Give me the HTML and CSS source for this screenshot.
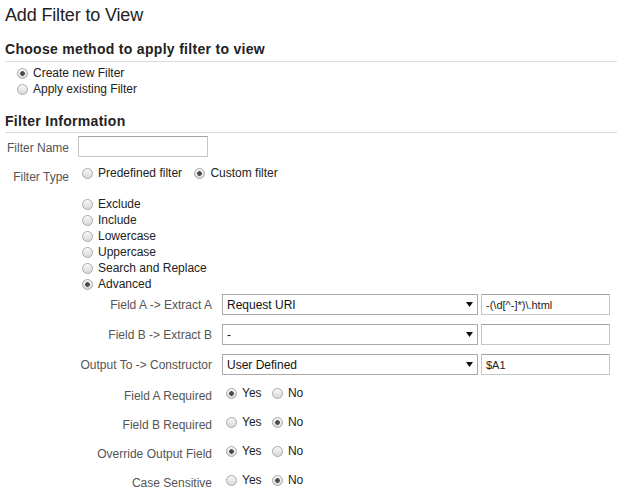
FILE: index.html
```html
<!DOCTYPE html>
<html>
<head>
<meta charset="utf-8">
<title>Add Filter to View</title>
<link rel="stylesheet" href="styles.css">
</head>
<body>
<div class="page">
  <h1 class="title">Add Filter to View</h1>

  <h2 class="section-head head-choose">Choose method to apply filter to view</h2>
  <div class="method-list">
    <label class="opt"><input class="radio" type="radio" name="method" checked><span>Create new Filter</span></label>
    <label class="opt"><input class="radio" type="radio" name="method"><span>Apply existing Filter</span></label>
  </div>

  <h2 class="section-head head-info">Filter Information</h2>
  <div class="row row-name">
    <span class="lbl lbl-short">Filter Name</span>
    <input class="text name-input" type="text">
  </div>
  <div class="row row-type">
    <span class="lbl lbl-short lbl-drop">Filter Type</span>
    <div class="inline-opts">
      <label class="opt opt-inline"><input class="radio" type="radio" name="ftype"><span>Predefined filter</span></label>
      <label class="opt opt-inline"><input class="radio" type="radio" name="ftype" checked><span>Custom filter</span></label>
    </div>
  </div>
  <div class="type-list">
    <label class="opt"><input class="radio" type="radio" name="custom"><span>Exclude</span></label>
    <label class="opt"><input class="radio" type="radio" name="custom"><span>Include</span></label>
    <label class="opt"><input class="radio" type="radio" name="custom"><span>Lowercase</span></label>
    <label class="opt"><input class="radio" type="radio" name="custom"><span>Uppercase</span></label>
    <label class="opt"><input class="radio" type="radio" name="custom"><span>Search and Replace</span></label>
    <label class="opt"><input class="radio" type="radio" name="custom" checked><span>Advanced</span></label>
  </div>

  <div class="adv">
    <div class="adv-row">
      <span class="lbl lbl-long lbl-field">Field A -&gt; Extract A</span>
      <div class="select-wrap">
        <select class="select"><option>Request URI</option></select>
        <svg class="arrow" width="7" height="5" viewBox="0 0 7 5"><path d="M0 0H7L3.5 5Z" fill="#111"/></svg>
      </div>
      <input class="text field-input" type="text" value="-(\d[^-]*)\.html">
    </div>
    <div class="adv-row">
      <span class="lbl lbl-long lbl-field">Field B -&gt; Extract B</span>
      <div class="select-wrap">
        <select class="select"><option>-</option></select>
        <svg class="arrow" width="7" height="5" viewBox="0 0 7 5"><path d="M0 0H7L3.5 5Z" fill="#111"/></svg>
      </div>
      <input class="text field-input" type="text" value="">
    </div>
    <div class="adv-row">
      <span class="lbl lbl-long lbl-field">Output To -&gt; Constructor</span>
      <div class="select-wrap">
        <select class="select"><option>User Defined</option></select>
        <svg class="arrow" width="7" height="5" viewBox="0 0 7 5"><path d="M0 0H7L3.5 5Z" fill="#111"/></svg>
      </div>
      <input class="text field-input" type="text" value="$A1">
    </div>

    <div class="yn-list">
      <div class="yn-row">
        <span class="lbl lbl-long lbl-drop">Field A Required</span>
        <div class="yn-opts">
          <label class="opt opt-inline"><input class="radio" type="radio" name="areq" checked><span>Yes</span></label>
          <label class="opt opt-inline"><input class="radio" type="radio" name="areq"><span>No</span></label>
        </div>
      </div>
      <div class="yn-row">
        <span class="lbl lbl-long lbl-drop">Field B Required</span>
        <div class="yn-opts">
          <label class="opt opt-inline"><input class="radio" type="radio" name="breq"><span>Yes</span></label>
          <label class="opt opt-inline"><input class="radio" type="radio" name="breq" checked><span>No</span></label>
        </div>
      </div>
      <div class="yn-row">
        <span class="lbl lbl-long lbl-drop">Override Output Field</span>
        <div class="yn-opts">
          <label class="opt opt-inline"><input class="radio" type="radio" name="ovr" checked><span>Yes</span></label>
          <label class="opt opt-inline"><input class="radio" type="radio" name="ovr"><span>No</span></label>
        </div>
      </div>
      <div class="yn-row">
        <span class="lbl lbl-long lbl-drop">Case Sensitive</span>
        <div class="yn-opts">
          <label class="opt opt-inline"><input class="radio" type="radio" name="cs"><span>Yes</span></label>
          <label class="opt opt-inline"><input class="radio" type="radio" name="cs" checked><span>No</span></label>
        </div>
      </div>
    </div>
  </div>
</div>
</body>
</html>
```

FILE: styles.css
```css
html, body {
  margin: 0;
  padding: 0;
  background: #fff;
}

body {
  font-family: "Liberation Sans", Arial, sans-serif;
  font-size: 12px;
  color: #222;
}

.page {
  padding-left: 5px;
}

.title {
  margin: 0;
  padding-top: 4px;
  font-size: 18px;
  font-weight: normal;
  line-height: 22px;
  letter-spacing: -0.15px;
  color: #222;
}

.section-head {
  margin: 0;
  font-size: 14px;
  font-weight: bold;
  line-height: 16px;
  letter-spacing: 0.3px;
  color: #222;
  border-bottom: 1px solid #dcdcdc;
}

.head-choose {
  margin-top: 15px;
  padding-bottom: 4px;
}

.head-info {
  margin-top: 16px;
  padding-bottom: 3px;
}

.method-list {
  margin-top: 3px;
  padding-left: 12px;
}

.opt {
  display: flex;
  align-items: center;
  height: 16px;
  line-height: 16px;
  font-size: 12px;
  color: #222;
  white-space: nowrap;
}

.opt-inline {
  display: inline-flex;
}

.radio {
  appearance: none;
  -webkit-appearance: none;
  box-sizing: border-box;
  width: 11px;
  height: 11px;
  margin: 0 5px 0 0;
  border: 1px solid #a8a8a8;
  border-radius: 50%;
  background: linear-gradient(#f7f7f7, #d9d9d9);
  flex: none;
}

.radio:checked {
  background:
    radial-gradient(circle at center, #4b4b4b 0, #4b4b4b 2px, rgba(75, 75, 75, 0) 2.6px),
    linear-gradient(#f7f7f7, #d9d9d9);
}

.row {
  display: flex;
}

.row-name {
  margin-top: 3px;
  align-items: center;
  height: 21px;
}

.row-type {
  margin-top: 8px;
  align-items: flex-start;
}

.lbl {
  font-size: 12px;
  color: #555;
  text-align: right;
  white-space: nowrap;
  flex: none;
}

.lbl-short {
  width: 64px;
  margin-right: 9px;
}

.row-name .lbl {
  padding-top: 2px;
}

.lbl-drop {
  line-height: 16px;
  padding-top: 4px;
}

.text {
  box-sizing: border-box;
  height: 21px;
  margin: 0;
  padding: 0 4px;
  border: 1px solid #c6c6c6;
  border-top-color: #a2a2a2;
  background: #fff;
  font-family: "Liberation Sans", Arial, sans-serif;
  font-size: 11px;
  color: #222;
  outline: none;
}

.name-input {
  width: 130px;
}

.inline-opts {
  margin-left: 4px;
}

.inline-opts .opt-inline:first-child {
  margin-right: 9px;
}

.type-list {
  margin-top: 11px;
  padding-left: 77px;
}

.adv {
  margin-top: 2px;
}

.adv-row {
  display: flex;
  align-items: flex-start;
  height: 21px;
  margin-bottom: 9px;
}

.lbl-long {
  width: 207px;
  margin-right: 10px;
}

.lbl-field {
  line-height: 21px;
  padding-top: 1px;
}

.select-wrap {
  position: relative;
  width: 256px;
  height: 21px;
  margin-right: 3px;
  flex: none;
}

.select {
  appearance: none;
  -webkit-appearance: none;
  box-sizing: border-box;
  width: 100%;
  height: 21px;
  margin: 0;
  padding: 0 0 0 4px;
  border: 1px solid #a9a9a9;
  border-radius: 0;
  background: #fff;
  font-family: "Liberation Sans", Arial, sans-serif;
  font-size: 12px;
  color: #111;
  outline: none;
}

.arrow {
  position: absolute;
  right: 5px;
  top: 8px;
  pointer-events: none;
}

.field-input {
  width: 129px;
}

.yn-row {
  display: flex;
  align-items: flex-start;
  height: 29px;
}

.yn-opts {
  padding-top: 1px;
  padding-left: 4px;
}

.yn-opts .opt-inline:first-child {
  margin-right: 7px;
}
```
